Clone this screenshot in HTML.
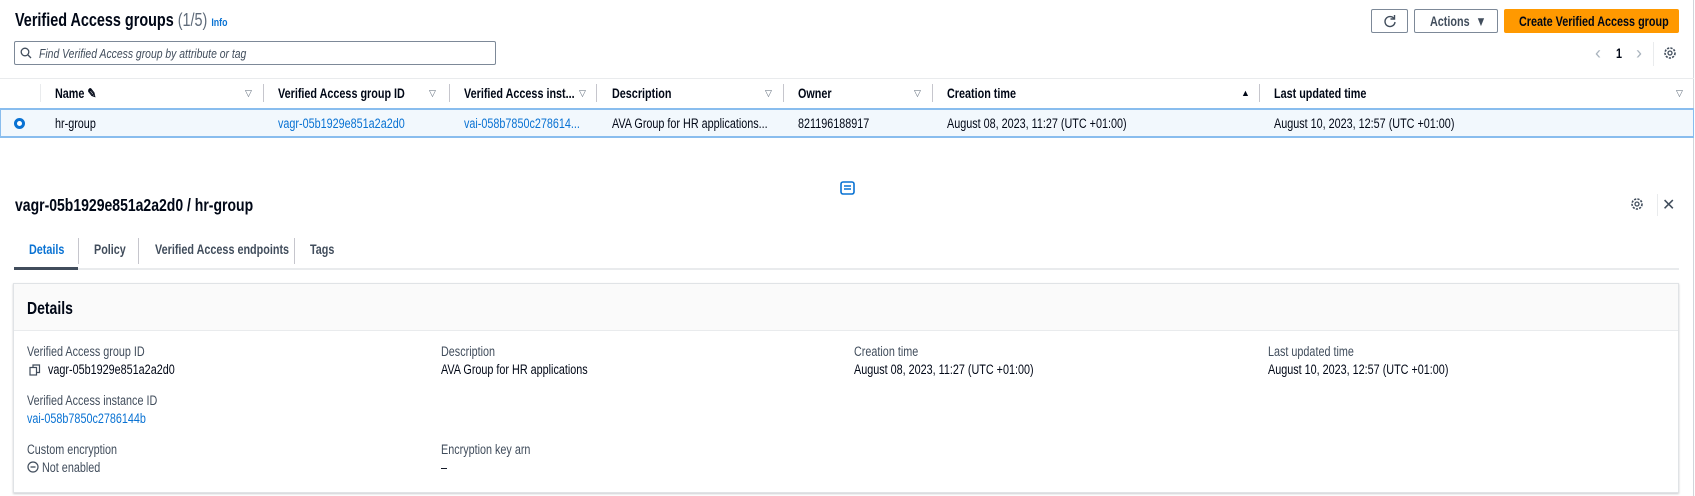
<!DOCTYPE html>
<html><head><meta charset="utf-8"><style>
*{box-sizing:border-box;margin:0;padding:0}
body{width:1695px;height:496px;background:#fff;position:relative;overflow:hidden;font-family:"Liberation Sans",sans-serif;font-size:13.5px;color:#000716}
.a{position:absolute;white-space:nowrap}
.a:not(.x){transform:scaleX(.8);transform-origin:0 0}
.b{font-weight:bold}
.l{color:#0972d3}
.g{color:#414d5c}
.sep{position:absolute;width:1px;background:#c6c6cd}
.tri{position:absolute;font-size:9px;color:#5f6b7a}
</style></head><body>
<div class="a x" style="right:1px;top:0;width:1px;height:496px;background:#d1d5db"></div>

<div class="a b" style="left:15px;top:10px;font-size:18px">Verified Access groups <span style="font-weight:normal;color:#5f6b7a">(1/5)</span> <span class="l" style="font-size:11px">Info</span></div>

<div class="a x" style="left:14px;top:41px;width:482px;height:24px;border:1px solid #7d8998;border-radius:2px"></div>
<svg class="a x" style="left:20px;top:47px" width="12" height="12" viewBox="0 0 12 12"><circle cx="5" cy="5" r="3.8" fill="none" stroke="#414d5c" stroke-width="1.3"/><path d="M8 8l3 3" stroke="#414d5c" stroke-width="1.3"/></svg>
<div class="a g" style="left:39px;top:46px;font-style:italic;font-size:13px">Find Verified Access group by attribute or tag</div>

<div class="a x" style="left:1371px;top:9px;width:37px;height:24px;border:1px solid #7d8998;border-radius:2px"></div>
<svg class="a x" style="left:1383px;top:14px" width="14" height="14" viewBox="0 0 14 14"><path d="M11 4.5A5 5 0 1 0 12 8" fill="none" stroke="#414d5c" stroke-width="1.4"/><path d="M11.5 1v4h-4" fill="none" stroke="#414d5c" stroke-width="1.4"/></svg>
<div class="a x" style="left:1414px;top:9px;width:84px;height:24px;border:1px solid #7d8998;border-radius:2px"></div>
<div class="a b g" style="left:1430px;top:14px">Actions &nbsp;&#9660;</div>
<div class="a x" style="left:1504px;top:9px;width:175px;height:24px;background:#ff9900;border-radius:2px"></div>
<div class="a b" style="left:1519px;top:14px">Create Verified Access group</div>

<div class="a x" style="left:1595px;top:43px;color:#aab4be;font-size:18px">&#8249;</div>
<div class="a b" style="left:1616px;top:46px">1</div>
<div class="a x" style="left:1636px;top:43px;color:#aab4be;font-size:18px">&#8250;</div>
<div class="sep" style="left:1653px;top:42px;height:24px;background:#e9ebed"></div>
<svg class="a x" style="left:1663px;top:46px" width="14" height="14" viewBox="0 0 14 14"><circle cx="7" cy="7" r="5" fill="none" stroke="#414d5c" stroke-width="1.6" stroke-dasharray="2.2 1.2"/><circle cx="7" cy="7" r="2" fill="none" stroke="#414d5c" stroke-width="1.3"/></svg>

<div class="a x" style="left:0;top:78px;width:1694px;height:1px;background:#e9ebed"></div>
<div class="a b" style="left:55px;top:86px">Name &#9998;</div>
<div class="a b" style="left:278px;top:86px">Verified Access group ID</div>
<div class="a b" style="left:464px;top:86px">Verified Access inst...</div>
<div class="a b" style="left:612px;top:86px">Description</div>
<div class="a b" style="left:798px;top:86px">Owner</div>
<div class="a b" style="left:947px;top:86px">Creation time</div>
<div class="a b" style="left:1274px;top:86px">Last updated time</div>
<div class="tri" style="left:245px;top:88px">&#9661;</div>
<div class="tri" style="left:429px;top:88px">&#9661;</div>
<div class="tri" style="left:579px;top:88px">&#9661;</div>
<div class="tri" style="left:765px;top:88px">&#9661;</div>
<div class="tri" style="left:914px;top:88px">&#9661;</div>
<div class="tri" style="left:1241px;top:88px;color:#000716">&#9650;</div>
<div class="tri" style="left:1676px;top:88px">&#9661;</div>
<div class="sep" style="left:263px;top:84px;height:18px"></div>
<div class="sep" style="left:449px;top:84px;height:18px"></div>
<div class="sep" style="left:596px;top:84px;height:18px"></div>
<div class="sep" style="left:783px;top:84px;height:18px"></div>
<div class="sep" style="left:932px;top:84px;height:18px"></div>
<div class="sep" style="left:1259px;top:84px;height:18px"></div>
<div class="sep" style="left:40px;top:84px;height:18px;background:#e9ebed"></div>

<div class="a x" style="left:0;top:108px;width:1694px;height:30px;background:#f2f8fd;border-style:solid;border-width:2px 1px 2px 1px;border-color:#89bdee"></div>
<div class="a x" style="left:14px;top:118px;width:11px;height:11px;border-radius:50%;border:3.5px solid #0972d3;background:#fff"></div>
<div class="a" style="left:55px;top:116px">hr-group</div>
<div class="a l" style="left:278px;top:116px">vagr-05b1929e851a2a2d0</div>
<div class="a l" style="left:464px;top:116px">vai-058b7850c278614...</div>
<div class="a" style="left:612px;top:116px">AVA Group for HR applications...</div>
<div class="a" style="left:798px;top:116px">821196188917</div>
<div class="a" style="left:947px;top:116px">August 08, 2023, 11:27 (UTC +01:00)</div>
<div class="a" style="left:1274px;top:116px">August 10, 2023, 12:57 (UTC +01:00)</div>

<svg class="a x" style="left:840px;top:181px" width="15" height="14" viewBox="0 0 15 14"><rect x="1" y="1" width="13" height="12" rx="2" fill="none" stroke="#0972d3" stroke-width="1.6"/><path d="M4 5h7M4 8h7" stroke="#0972d3" stroke-width="1.4"/></svg>

<div class="a b" style="left:15px;top:195px;font-size:17.5px">vagr-05b1929e851a2a2d0 / hr-group</div>
<svg class="a x" style="left:1630px;top:197px" width="14" height="14" viewBox="0 0 14 14"><circle cx="7" cy="7" r="5" fill="none" stroke="#414d5c" stroke-width="1.6" stroke-dasharray="2.2 1.2"/><circle cx="7" cy="7" r="2" fill="none" stroke="#414d5c" stroke-width="1.3"/></svg>
<div class="sep" style="left:1657px;top:194px;height:22px;background:#e9ebed"></div>
<div class="a x" style="left:1662px;top:195px;font-size:16px;color:#414d5c">&#x2715;</div>

<div class="a b l" style="left:29px;top:242px">Details</div>
<div class="a b g" style="left:94px;top:242px">Policy</div>
<div class="a b g" style="left:155px;top:242px">Verified Access endpoints</div>
<div class="a b g" style="left:310px;top:242px">Tags</div>
<div class="sep" style="left:78px;top:238px;height:26px"></div>
<div class="sep" style="left:138px;top:238px;height:26px"></div>
<div class="sep" style="left:294px;top:238px;height:26px"></div>
<div class="a x" style="left:14px;top:268px;width:1665px;height:2px;background:#e9ebed"></div>
<div class="a x" style="left:14px;top:267px;width:64px;height:3px;background:#414d5c"></div>

<div class="a x" style="left:13px;top:283px;width:1666px;height:210px;border:1px solid #e0e3e6;box-shadow:0 1px 2px rgba(0,7,22,.2)"></div>
<div class="a x" style="left:14px;top:284px;width:1664px;height:47px;background:#fafafa;border-bottom:1px solid #e9ebed"></div>
<div class="a b" style="left:27px;top:298px;font-size:17.5px">Details</div>

<div class="a g" style="left:27px;top:344px">Verified Access group ID</div>
<svg class="a x" style="left:29px;top:364px" width="12" height="12" viewBox="0 0 12 12"><rect x="1" y="3.5" width="6.5" height="7.5" fill="none" stroke="#414d5c" stroke-width="1.2"/><path d="M4 3.5V1h6.5v7.5H7.5" fill="none" stroke="#414d5c" stroke-width="1.2"/></svg>
<div class="a" style="left:48px;top:362px">vagr-05b1929e851a2a2d0</div>
<div class="a g" style="left:27px;top:393px">Verified Access instance ID</div>
<div class="a l" style="left:27px;top:411px">vai-058b7850c2786144b</div>
<div class="a g" style="left:27px;top:442px">Custom encryption</div>
<svg class="a x" style="left:27px;top:461px" width="12" height="12" viewBox="0 0 12 12"><circle cx="6" cy="6" r="5" fill="none" stroke="#414d5c" stroke-width="1.2"/><path d="M3.5 6h5" stroke="#414d5c" stroke-width="1.3"/></svg>
<div class="a g" style="left:42px;top:460px">Not enabled</div>

<div class="a g" style="left:441px;top:344px">Description</div>
<div class="a" style="left:441px;top:362px">AVA Group for HR applications</div>
<div class="a g" style="left:441px;top:442px">Encryption key arn</div>
<div class="a" style="left:441px;top:460px">–</div>

<div class="a g" style="left:854px;top:344px">Creation time</div>
<div class="a" style="left:854px;top:362px">August 08, 2023, 11:27 (UTC +01:00)</div>
<div class="a g" style="left:1268px;top:344px">Last updated time</div>
<div class="a" style="left:1268px;top:362px">August 10, 2023, 12:57 (UTC +01:00)</div>
</body></html>
